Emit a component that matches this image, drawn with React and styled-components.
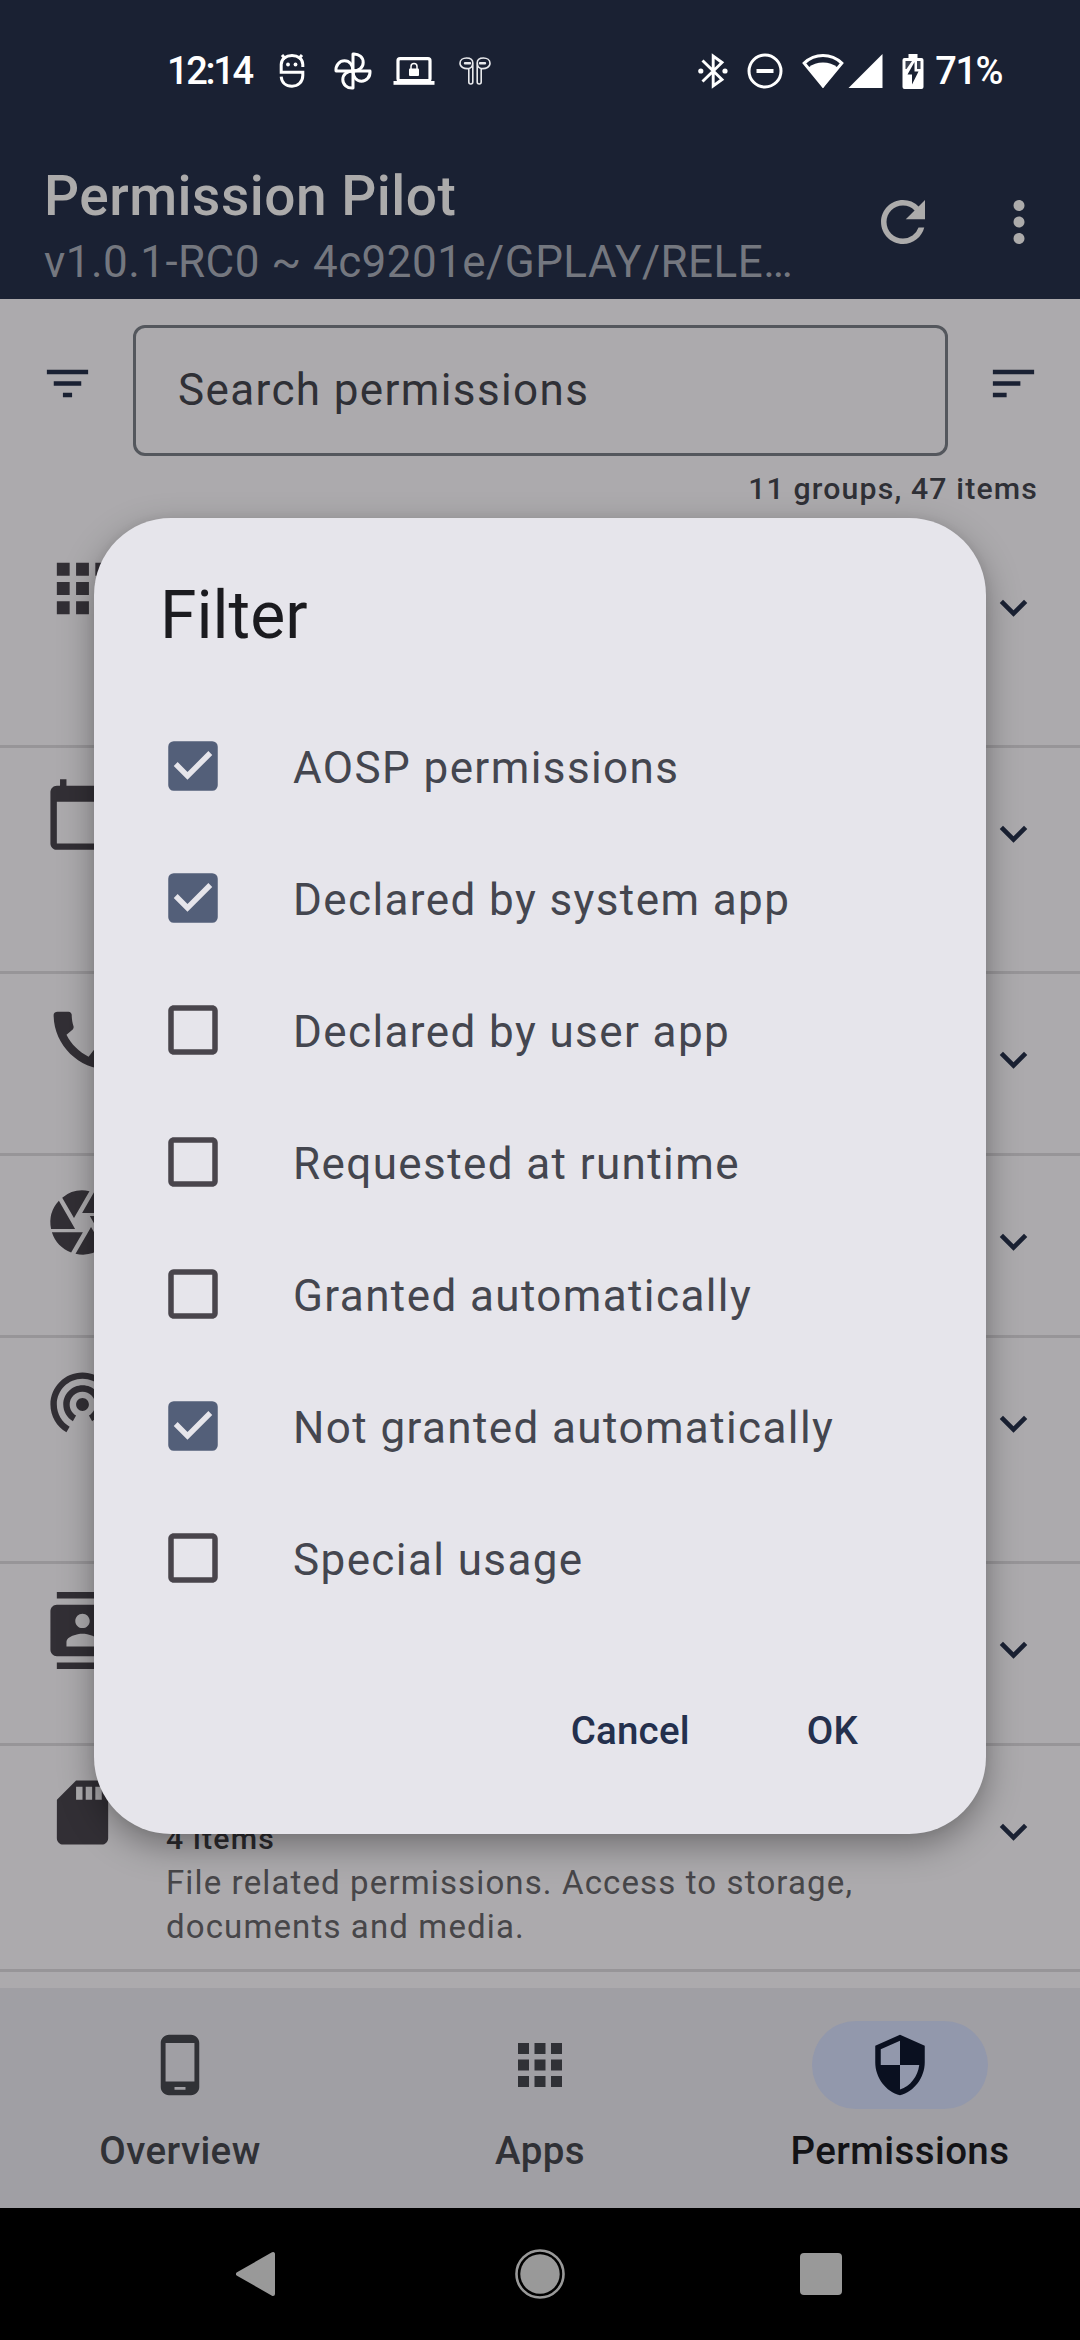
import React from 'react';
import styled, { createGlobalStyle } from 'styled-components';
import {
  MdApps, MdCalendarToday, MdCall, MdCamera, MdWifiTethering, MdContacts, MdSdStorage,
  MdExpandMore, MdRefresh, MdMoreVert, MdFilterList, MdSort, MdPhoneAndroid, MdSecurity,
  MdCheckBox, MdCheckBoxOutlineBlank,
} from 'react-icons/md';

const GlobalStyle = createGlobalStyle`
  *, *::before, *::after { box-sizing: border-box; }
  body { margin: 0; background: #000; font-family: Roboto, "Liberation Sans", sans-serif; }
  svg { display: block; flex: none; }
`;

const Screen = styled.div`
  position: relative;
  width: 1080px;
  height: 2340px;
  display: flex;
  flex-direction: column;
  overflow: hidden;
  background: #acaaad;
`;

const StatusBar = styled.div`
  height: 142px;
  flex: none;
  display: flex;
  align-items: center;
  justify-content: space-between;
  padding: 0 78px 0 167px;
  background: #1a2133;
  color: #fff;
`;

const StatusGroup = styled.div`
  display: flex;
  align-items: center;
  gap: ${(p) => p.$gap || 0}px;
`;

const StatusText = styled.span`
  font-size: 38px;
  line-height: 44px;
  font-weight: 500;
  letter-spacing: ${(p) => p.$spacing}px;
  white-space: nowrap;
`;

const Clock = styled(StatusText)`
  width: 94px;
`;

const NotificationCell = styled.div`
  width: 61px;
  display: flex;
  justify-content: center;
`;

const AppBar = styled.header`
  height: 157px;
  flex: none;
  display: flex;
  align-items: flex-start;
  padding: 22px 28px 0 44px;
  background: #1a2133;
  color: #acabab;
`;

const TitleBlock = styled.div`
  flex: 1;
  display: flex;
  flex-direction: column;
  gap: 8px;
`;

const AppTitle = styled.h1`
  margin: 0;
  font-size: 55px;
  line-height: 64px;
  font-weight: 500;
  letter-spacing: 0.5px;
`;

const AppSubtitle = styled.div`
  font-size: 44px;
  line-height: 52px;
  letter-spacing: 0.45px;
  color: #74777f;
  white-space: nowrap;
`;

const BarActions = styled.div`
  display: flex;
  gap: 50px;
  padding-top: 25px;
`;

const SearchRow = styled.div`
  display: flex;
  align-items: flex-start;
  gap: 38.5px;
  padding: 26px 39px 0 39.5px;
`;

const ToolIcon = styled.div`
  padding-top: 31px;
  color: #1a2133;
`;

const SearchField = styled.div`
  flex: 1;
  height: 131px;
  display: flex;
  align-items: center;
  padding: 0 42px 1px;
  border: 3px solid #54575d;
  border-radius: 12px;
  font-size: 44px;
  line-height: 52px;
  letter-spacing: 1.375px;
  color: #2f3036;
`;

const Count = styled.div`
  height: 51px;
  margin-top: 15px;
  padding-right: 42px;
  text-align: right;
  font-size: 30.25px;
  line-height: 36px;
  font-weight: 500;
  letter-spacing: 1.15px;
  color: #2f3036;
`;

const List = styled.div`
  flex: 1;
  display: flex;
  flex-direction: column;
`;

const Row = styled.div`
  height: ${(p) => p.$height}px;
  flex: none;
  display: flex;
  align-items: flex-start;
  padding: 0 39px 0 44px;
  border-bottom: 3px solid #979598;
`;

const GroupIcon = styled.div`
  padding-top: 27.5px;
  color: #322f35;
`;

const RowText = styled.div`
  flex: 1;
  padding: 71px 60px 0 45px;
`;

const ItemCount = styled.div`
  font-size: 30.25px;
  line-height: 44px;
  font-weight: 500;
  letter-spacing: 1.2px;
  color: #2b2a2e;
`;

const Description = styled.div`
  font-size: 33px;
  line-height: 44px;
  letter-spacing: 1.13px;
  color: #474649;
`;

const Chevron = styled.div`
  padding-top: 58px;
  color: #1a2133;
`;

const BottomNav = styled.nav`
  height: 220px;
  flex: none;
  display: grid;
  grid-template-columns: repeat(3, 1fr);
  background: #a09fa4;
`;

const NavItem = styled.div`
  display: flex;
  flex-direction: column;
  align-items: center;
  padding-top: 33px;
  gap: 20px;
  font-size: 38.5px;
  line-height: 44px;
  font-weight: 500;
  letter-spacing: 0.4px;
  color: ${(p) => (p.$active ? '#131316' : '#303136')};
`;

const Pill = styled.div`
  width: 176px;
  height: 88px;
  display: flex;
  align-items: center;
  justify-content: center;
  border-radius: 44px;
  background: ${(p) => (p.$active ? '#9298ac' : 'transparent')};
  color: ${(p) => (p.$active ? '#0a1020' : '#303136')};
`;

const SystemNav = styled.div`
  height: 132px;
  flex: none;
  display: flex;
  align-items: center;
  justify-content: space-between;
  padding: 0 238px 0 236px;
  background: #000;
`;

const Overlay = styled.div`
  position: absolute;
  inset: 0;
  padding: 518px 94px 0;
`;

const Dialog = styled.section`
  height: 1316px;
  display: flex;
  flex-direction: column;
  padding: 60px 66px 0;
  border-radius: 77px;
  background: #e6e5eb;
  box-shadow: 0 12px 34px rgba(0, 0, 0, 0.34), 0 0 10px rgba(0, 0, 0, 0.05);
`;

const DialogTitle = styled.h2`
  margin: 0 0 46px;
  font-size: 66px;
  line-height: 76px;
  font-weight: 400;
  color: #1b1b1f;
`;

const Option = styled.div`
  height: 132px;
  display: flex;
  align-items: center;
  gap: 67px;
  color: ${(p) => (p.$checked ? '#535f79' : '#49454c')};
`;

const OptionLabel = styled.span`
  padding-top: 4px;
  font-size: 44px;
  line-height: 52px;
  letter-spacing: 1.4px;
  color: #44464f;
`;

const Actions = styled.div`
  display: flex;
  justify-content: flex-end;
  gap: 117px;
  padding: 85px 62px 0 0;
`;

const ActionButton = styled.span`
  font-size: 38.5px;
  line-height: 44px;
  font-weight: 500;
  letter-spacing: 0.2px;
  color: #24304d;
`;

const AndroidHead = () => (
  <svg width="26" height="36" viewBox="0 0 26 36" fill="none" stroke="#fff" strokeWidth="3">
    <path d="M23.8 14V11.5C23.8 6 19 2.5 13 2.5S2.2 6 2.2 11.5V19.2H23.8V22.5C23.8 29 19 33.2 13 33.2S2.6 29.5 2.2 23.6" />
    <path d="M3 2l3.5 4M23 2l-3.5 4" />
    <circle cx="9" cy="11.5" r="1.9" fill="#fff" stroke="none" />
    <circle cx="16.500" cy="11.5" r="1.9" fill="#fff" stroke="none" />
  </svg>
);

const Pinwheel = () => (
  <svg width="38" height="38" viewBox="0 0 38 38" fill="none" stroke="#fff" strokeWidth="3" strokeLinejoin="round">
    {[0, 90, 180, 270].map((a) => (
      <path key={a} transform={`rotate(${a} 19 19)`} d="M19 19V2C25 1.500 29.200 5.500 29.200 10.500C29.200 15.500 25 19 19 19Z" />
    ))}
  </svg>
);

const LaptopLock = () => (
  <svg width="42" height="28" viewBox="0 0 42 28">
    <rect x="5" y="1.7" width="32" height="22" rx="2" fill="none" stroke="#fff" strokeWidth="3.2" />
    <rect x="0.5" y="24" width="41" height="3.8" fill="#fff" />
    <rect x="16" y="11.5" width="10" height="7.5" rx="1" fill="#fff" />
    <path d="M18 12V9.500a3 3 0 0 1 6 0V12" fill="none" stroke="#fff" strokeWidth="1.5" />
  </svg>
);

const Earbuds = () => (
  <svg width="32" height="28" viewBox="0 0 32 28" fill="none" stroke="#e8e9ec" strokeWidth="1.6">
    <path d="M9.800 11.500C5 12 1 10 1 6.200C1 3 4 1 7.500 1C11.500 1 13.800 3 13.800 6V25a2 2 0 0 1-4 0V11.500C12 11.200 13.500 9.500 13.800 6" />
    <path d="M22.200 11.500C27 12 31 10 31 6.200C31 3 28 1 24.500 1C20.500 1 18.200 3 18.200 6V25a2 2 0 0 0 4 0V11.500C20 11.200 18.500 9.500 18.200 6" />
    <path d="M6 6.200h5M21 6.200h5" strokeWidth="2.4" strokeLinecap="round" />
  </svg>
);

const Bluetooth = () => (
  <svg width="30" height="36" viewBox="0 0 30 36" fill="none" stroke="#fff" strokeWidth="2.9">
    <path d="M4.500 7.500L24 26.500L15.200 33V3L24 9.500L4.500 28.500" />
    <circle cx="2.8" cy="18" r="2.6" fill="#fff" stroke="none" />
    <circle cx="27" cy="18" r="2.6" fill="#fff" stroke="none" />
  </svg>
);

const DoNotDisturb = () => (
  <svg width="36" height="36" viewBox="0 0 36 36" fill="none" stroke="#fff">
    <circle cx="18" cy="18" r="16" strokeWidth="3" />
    <path d="M9.500 18h17" strokeWidth="4" />
  </svg>
);

const Wifi = () => (
  <svg width="42" height="36" viewBox="0 0 42 36">
    <path d="M21 33L2.200 10.200C7.500 5.200 13.800 2.600 21 2.600S34.500 5.200 39.800 10.200Z" fill="none" stroke="#fff" strokeWidth="3" />
    <path d="M21 35L6.500 14.500C10.500 11.200 15.500 9.500 21 9.500S31.500 11.200 35.500 14.500Z" fill="#fff" />
  </svg>
);

const Signal = () => (
  <svg width="35" height="36" viewBox="0 0 35 36"><path d="M34.500 1V35H0.500Z" fill="#fff" /></svg>
);

const Battery = () => (
  <svg width="22" height="36" viewBox="0 0 22 36">
    <path d="M6.500 1h9v4h4a2 2 0 0 1 2 2V34a2 2 0 0 1-2 2H2.500a2 2 0 0 1-2-2V7a2 2 0 0 1 2-2h4Z" fill="#fff" />
    <path d="M3.500 8H10L4.500 16H3.500ZM15 8h3.500v8H15Z" fill="#1a2133" opacity="0.85" />
    <path d="M12.500 9L5.500 21.500H10V31.500L16.500 18.500H12.500Z" fill="#1a2133" />
  </svg>
);

const BackKey = () => (
  <svg width="44" height="46" viewBox="0 0 44 46">
    <path d="M2 23L37 3V43Z" fill="#999" stroke="#999" strokeWidth="4" strokeLinejoin="round" />
  </svg>
);

const HomeKey = () => (
  <svg width="50" height="50" viewBox="0 0 50 50">
    <circle cx="25" cy="25" r="23.5" fill="none" stroke="#999" strokeWidth="2.6" />
    <circle cx="25" cy="25" r="19.7" fill="#999" />
  </svg>
);

const RecentKey = styled.div`
  width: 42px;
  height: 42px;
  border-radius: 4px;
  background: #999;
`;

const notifications = [AndroidHead, Pinwheel, LaptopLock, Earbuds];

const groups = [
  { Icon: MdApps, height: 226 },
  { Icon: MdCalendarToday, height: 226 },
  { Icon: MdCall, height: 182 },
  { Icon: MdCamera, height: 182 },
  { Icon: MdWifiTethering, height: 226, viewBox: '0 1 24 24' },
  { Icon: MdContacts, height: 182 },
  {
    Icon: MdSdStorage,
    height: 226,
    count: '4 items',
    text: 'File related permissions. Access to storage, documents and media.',
  },
];

const options = [
  ['AOSP permissions', true],
  ['Declared by system app', true],
  ['Declared by user app', false],
  ['Requested at runtime', false],
  ['Granted automatically', false],
  ['Not granted automatically', true],
  ['Special usage', false],
];

const tabs = [
  ['Overview', MdPhoneAndroid],
  ['Apps', MdApps],
  ['Permissions', MdSecurity],
];

export default function App() {
  return (
    <>
      <GlobalStyle />
      <Screen>
        <StatusBar>
          <StatusGroup>
            <Clock $spacing={-2.3}>12:14</Clock>
            {notifications.map((Icon, i) => (
              <NotificationCell key={i}><Icon /></NotificationCell>
            ))}
          </StatusGroup>
          <StatusGroup $gap={19}>
            <Bluetooth />
            <DoNotDisturb />
            <StatusGroup $gap={4}>
              <Wifi />
              <Signal />
            </StatusGroup>
            <StatusGroup $gap={11}>
              <Battery />
              <StatusText $spacing={-1.5}>71%</StatusText>
            </StatusGroup>
          </StatusGroup>
        </StatusBar>
        <AppBar>
          <TitleBlock>
            <AppTitle>Permission Pilot</AppTitle>
            <AppSubtitle>v1.0.1-RC0 ~ 4c9201e/GPLAY/RELE…</AppSubtitle>
          </TitleBlock>
          <BarActions>
            <MdRefresh size={66} />
            <MdMoreVert size={66} />
          </BarActions>
        </AppBar>
        <SearchRow>
          <ToolIcon><MdFilterList size={55} /></ToolIcon>
          <SearchField>Search permissions</SearchField>
          <ToolIcon><MdSort size={55} /></ToolIcon>
        </SearchRow>
        <Count>11 groups, 47 items</Count>
        <List>
          {groups.map(({ Icon, height, viewBox = '0 0 24 24', count, text }, i) => (
            <Row key={i} $height={height}>
              <GroupIcon><Icon size={77} viewBox={viewBox} /></GroupIcon>
              <RowText>
                {count && <ItemCount>{count}</ItemCount>}
                {text && <Description>{text}</Description>}
              </RowText>
              <Chevron><MdExpandMore size={55} /></Chevron>
            </Row>
          ))}
        </List>
        <BottomNav>
          {tabs.map(([label, Icon]) => (
            <NavItem key={label} $active={label === 'Permissions'}>
              <Pill $active={label === 'Permissions'}><Icon size={66} /></Pill>
              {label}
            </NavItem>
          ))}
        </BottomNav>
        <SystemNav>
          <BackKey />
          <HomeKey />
          <RecentKey />
        </SystemNav>
        <Overlay>
          <Dialog>
            <DialogTitle>Filter</DialogTitle>
            {options.map(([label, checked]) => (
              <Option key={label} $checked={checked}>
                {checked ? <MdCheckBox size={66} /> : <MdCheckBoxOutlineBlank size={66} />}
                <OptionLabel>{label}</OptionLabel>
              </Option>
            ))}
            <Actions>
              <ActionButton>Cancel</ActionButton>
              <ActionButton>OK</ActionButton>
            </Actions>
          </Dialog>
        </Overlay>
      </Screen>
    </>
  );
}
